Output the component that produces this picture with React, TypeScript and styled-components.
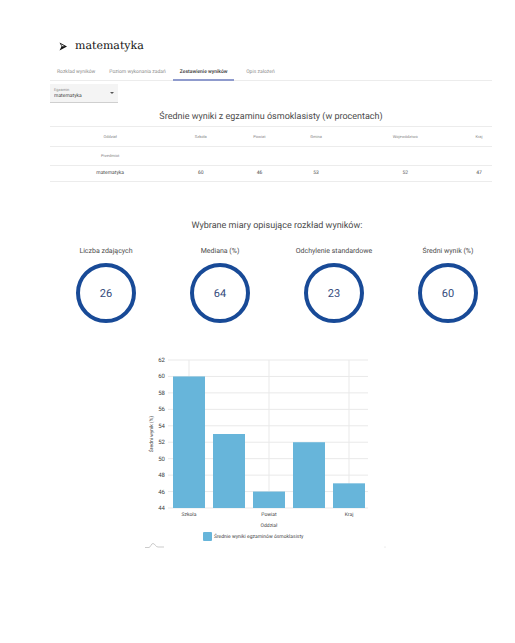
import React, { useState } from "react";
import styled, { createGlobalStyle } from "styled-components";

const GlobalStyle = createGlobalStyle`
  * { box-sizing: border-box; }
  body {
    margin: 0;
    background: #fff;
    color: #444;
    font-family: Roboto, "Liberation Sans", sans-serif;
    text-rendering: geometricPrecision;
  }
`;

const Page = styled.main`
  padding: 37px 0 0;
`;

const TopicHeading = styled.h1`
  display: flex;
  align-items: center;
  gap: 8px;
  margin: 0 0 0 59px;
  height: 18px;
  color: #111;
  font: 400 11px/18px "DejaVu Serif", serif;
`;

const Results = styled.section`
  margin: 0 23px 0 50px;
`;

const Statistics = styled.section`
  margin: 38px 10px 0 49px;
`;

const TabBar = styled.nav`
  display: flex;
  margin-top: 9px;
  height: 17px;
  border-bottom: 1px solid #ececec;
`;

const Tab = styled.button<{ $active: boolean }>`
  height: 17px;
  min-width: 52px;
  padding: 2px 7px 0;
  border: 0;
  border-bottom: 2px solid ${(p) => (p.$active ? "#8f9bcd" : "transparent")};
  background: none;
  color: ${(p) => (p.$active ? "#333" : "#8c8c8c")};
  font: ${(p) => (p.$active ? 500 : 400)} 5px/13px Roboto, sans-serif;
  text-rendering: inherit;
  white-space: nowrap;
`;

const SelectField = styled.label`
  display: block;
  position: relative;
  width: 68px;
  height: 19px;
  margin-top: 3px;
  background: #f4f4f4;
  border-bottom: 1px solid #cfcfcf;
  color: #8c8c8c;
  font-size: 4px;
  line-height: 6px;
  padding: 3px 0 0 4px;
`;

const Select = styled.select`
  display: block;
  width: 60px;
  height: 6px;
  padding: 0;
  border: 0;
  appearance: none;
  background: none;
  color: #444;
  font: 400 5px/6px Roboto, sans-serif;
  text-rendering: inherit;
`;

const Caret = styled.svg`
  position: absolute;
  right: 4px;
  top: 8px;
`;

const Title = styled.h2`
  margin: 0;
  color: #4c4c4c;
  font: 400 9px/12px Roboto, sans-serif;
  text-align: center;
`;

const Table = styled.table`
  width: 100%;
  margin-top: 3px;
  border-collapse: collapse;
  table-layout: fixed;
  border-top: 1px solid #ececec;
`;

const ResultsTitle = styled(Title)`
  margin-top: 8px;
`;

const Row = styled.tr<{ $height: number }>`
  height: ${(p) => p.$height}px;
  border-bottom: 1px solid #ececec;
`;

const Head = styled.th`
  padding: 0;
  color: #858585;
  font: 400 4px/6px Roboto, sans-serif;
`;

const Cell = styled.td`
  padding: 0 0 1px;
  color: #4c4c4c;
  font: 400 5px/6px Roboto, sans-serif;
  text-align: center;
`;

const Measures = styled.div`
  display: grid;
  grid-template-columns: repeat(4, 1fr);
  margin-top: 14px;
`;

const Measure = styled.figure`
  display: flex;
  flex-direction: column;
  align-items: center;
  gap: 7px;
  margin: 0;
`;

const MeasureLabel = styled.figcaption`
  color: #4c4c4c;
  font-size: 7px;
  line-height: 10px;
`;

const Ring = styled.div`
  display: grid;
  place-items: center;
  width: 60px;
  height: 60px;
  border: 4px solid #184a97;
  border-radius: 50%;
  color: #354b7c;
  font-size: 11px;
`;

const ChartArea = styled.div`
  display: flex;
  justify-content: center;
  margin: 29px 0 0 18px;
`;

const ChartText = styled.text<{ $size?: number }>`
  fill: #444;
  font-family: Roboto, sans-serif;
  font-size: ${(p) => p.$size ?? 5}px;
`;

const TABS = ["Rozkład wyników", "Poziom wykonania zadań", "Zestawienie wyników", "Opis założeń"];
const COLUMNS = ["Szkoła", "Powiat", "Gmina", "Województwo", "Kraj"];
const SCORES = [60, 46, 53, 52, 47];
const WIDTHS = [120, 61, 56, 57, 121, 26];
const MEASURES: [string, number][] = [
  ["Liczba zdających", 26],
  ["Mediana (%)", 64],
  ["Odchylenie standardowe", 23],
  ["Średni wynik (%)", 60],
];
const BARS = [
  { name: "Szkoła", value: 60 },
  { name: "", value: 53 },
  { name: "Powiat", value: 46 },
  { name: "", value: 52 },
  { name: "Kraj", value: 47 },
];
const TICKS = [62, 60, 58, 56, 54, 52, 50, 48, 46, 44];

const BASE = 156;
const scaleY = (value: number) => BASE - ((value - 44) * 148) / 18;

function Chart() {
  return (
    <svg width="246" height="196" viewBox="0 0 246 196" role="img" aria-label="Średnie wyniki egzaminów ósmoklasisty">
      <g stroke="#e9e9e9" strokeWidth="1">
        {TICKS.map((t) => (
          <line key={t} x1="24" x2="224" y1={scaleY(t)} y2={scaleY(t)} />
        ))}
        {[45, 125, 205].map((x) => (
          <line key={x} x1={x} x2={x} y1="8" y2={BASE} />
        ))}
      </g>
      {TICKS.map((t) => (
        <ChartText key={t} $size={6} x="21" y={scaleY(t) + 2} textAnchor="end">{t}</ChartText>
      ))}
      {BARS.map((b, i) => (
        <g key={i}>
          <rect x={29 + i * 40} y={scaleY(b.value)} width="32" height={BASE - scaleY(b.value)} fill="#67b5da" />
          <ChartText x={45 + i * 40} y="164" textAnchor="middle">{b.name}</ChartText>
        </g>
      ))}
      <ChartText x="125" y="175" textAnchor="middle">Oddział</ChartText>
      <ChartText transform="translate(9 82) rotate(-90)" textAnchor="middle">Średni wynik (%)</ChartText>
      <rect x="59" y="180" width="9" height="9" rx="1" fill="#67b5da" />
      <ChartText x="70" y="186">Średnie wyniki egzaminów ósmoklasisty</ChartText>
      <path d="M1 195.500H5C7 195 7 191.500 9 191.500S11.500 195 14 195H20" fill="none" stroke="#b5b5b5" strokeWidth="0.700" />
      <circle cx="241" cy="195" r="0.500" fill="#ccc" />
    </svg>
  );
}

export default function App() {
  const [active, setActive] = useState(2);
  return (
    <Page>
      <GlobalStyle />
      <TopicHeading>
        <svg width="8" height="9" viewBox="0 0 8 9" aria-hidden="true">
          <path d="M0.500 0.500L8 4.500L0.500 8.500L2.500 4.500Z" fill="#111" />
          <path d="M2 2.200L5.600 4.200H3Z" fill="#fff" />
        </svg>
        matematyka
      </TopicHeading>
      <Results>
        <TabBar>
          {TABS.map((tab, i) => (
            <Tab key={tab} $active={i === active} onClick={() => setActive(i)}>{tab}</Tab>
          ))}
        </TabBar>
        <SelectField>
          Egzamin
          <Select defaultValue="matematyka">
            <option>matematyka</option>
          </Select>
          <Caret width="4" height="2" viewBox="0 0 4 2" aria-hidden="true">
            <path d="M0 0H4L2 2Z" fill="#555" />
          </Caret>
        </SelectField>
        <ResultsTitle>Średnie wyniki z egzaminu ósmoklasisty (w procentach)</ResultsTitle>
        <Table>
          <colgroup>
            {WIDTHS.map((w, i) => (
              <col key={i} style={{ width: `${(w / 441) * 100}%` }} />
            ))}
          </colgroup>
          <thead>
            <Row $height={20}>
              <Head scope="col">Oddział</Head>
              {COLUMNS.map((c) => (
                <Head key={c} scope="col">{c}</Head>
              ))}
            </Row>
            <Row $height={19}>
              <Head scope="col">Przedmiot</Head>
              <Head colSpan={5} />
            </Row>
          </thead>
          <tbody>
            <Row $height={16}>
              <Cell>matematyka</Cell>
              {SCORES.map((s) => (
                <Cell key={s}>{s}</Cell>
              ))}
            </Row>
          </tbody>
        </Table>
      </Results>
      <Statistics>
        <Title>Wybrane miary opisujące rozkład wyników:</Title>
        <Measures>
          {MEASURES.map(([label, value]) => (
            <Measure key={label}>
              <MeasureLabel>{label}</MeasureLabel>
              <Ring>{value}</Ring>
            </Measure>
          ))}
        </Measures>
      </Statistics>
      <ChartArea>
        <Chart />
      </ChartArea>
    </Page>
  );
}
